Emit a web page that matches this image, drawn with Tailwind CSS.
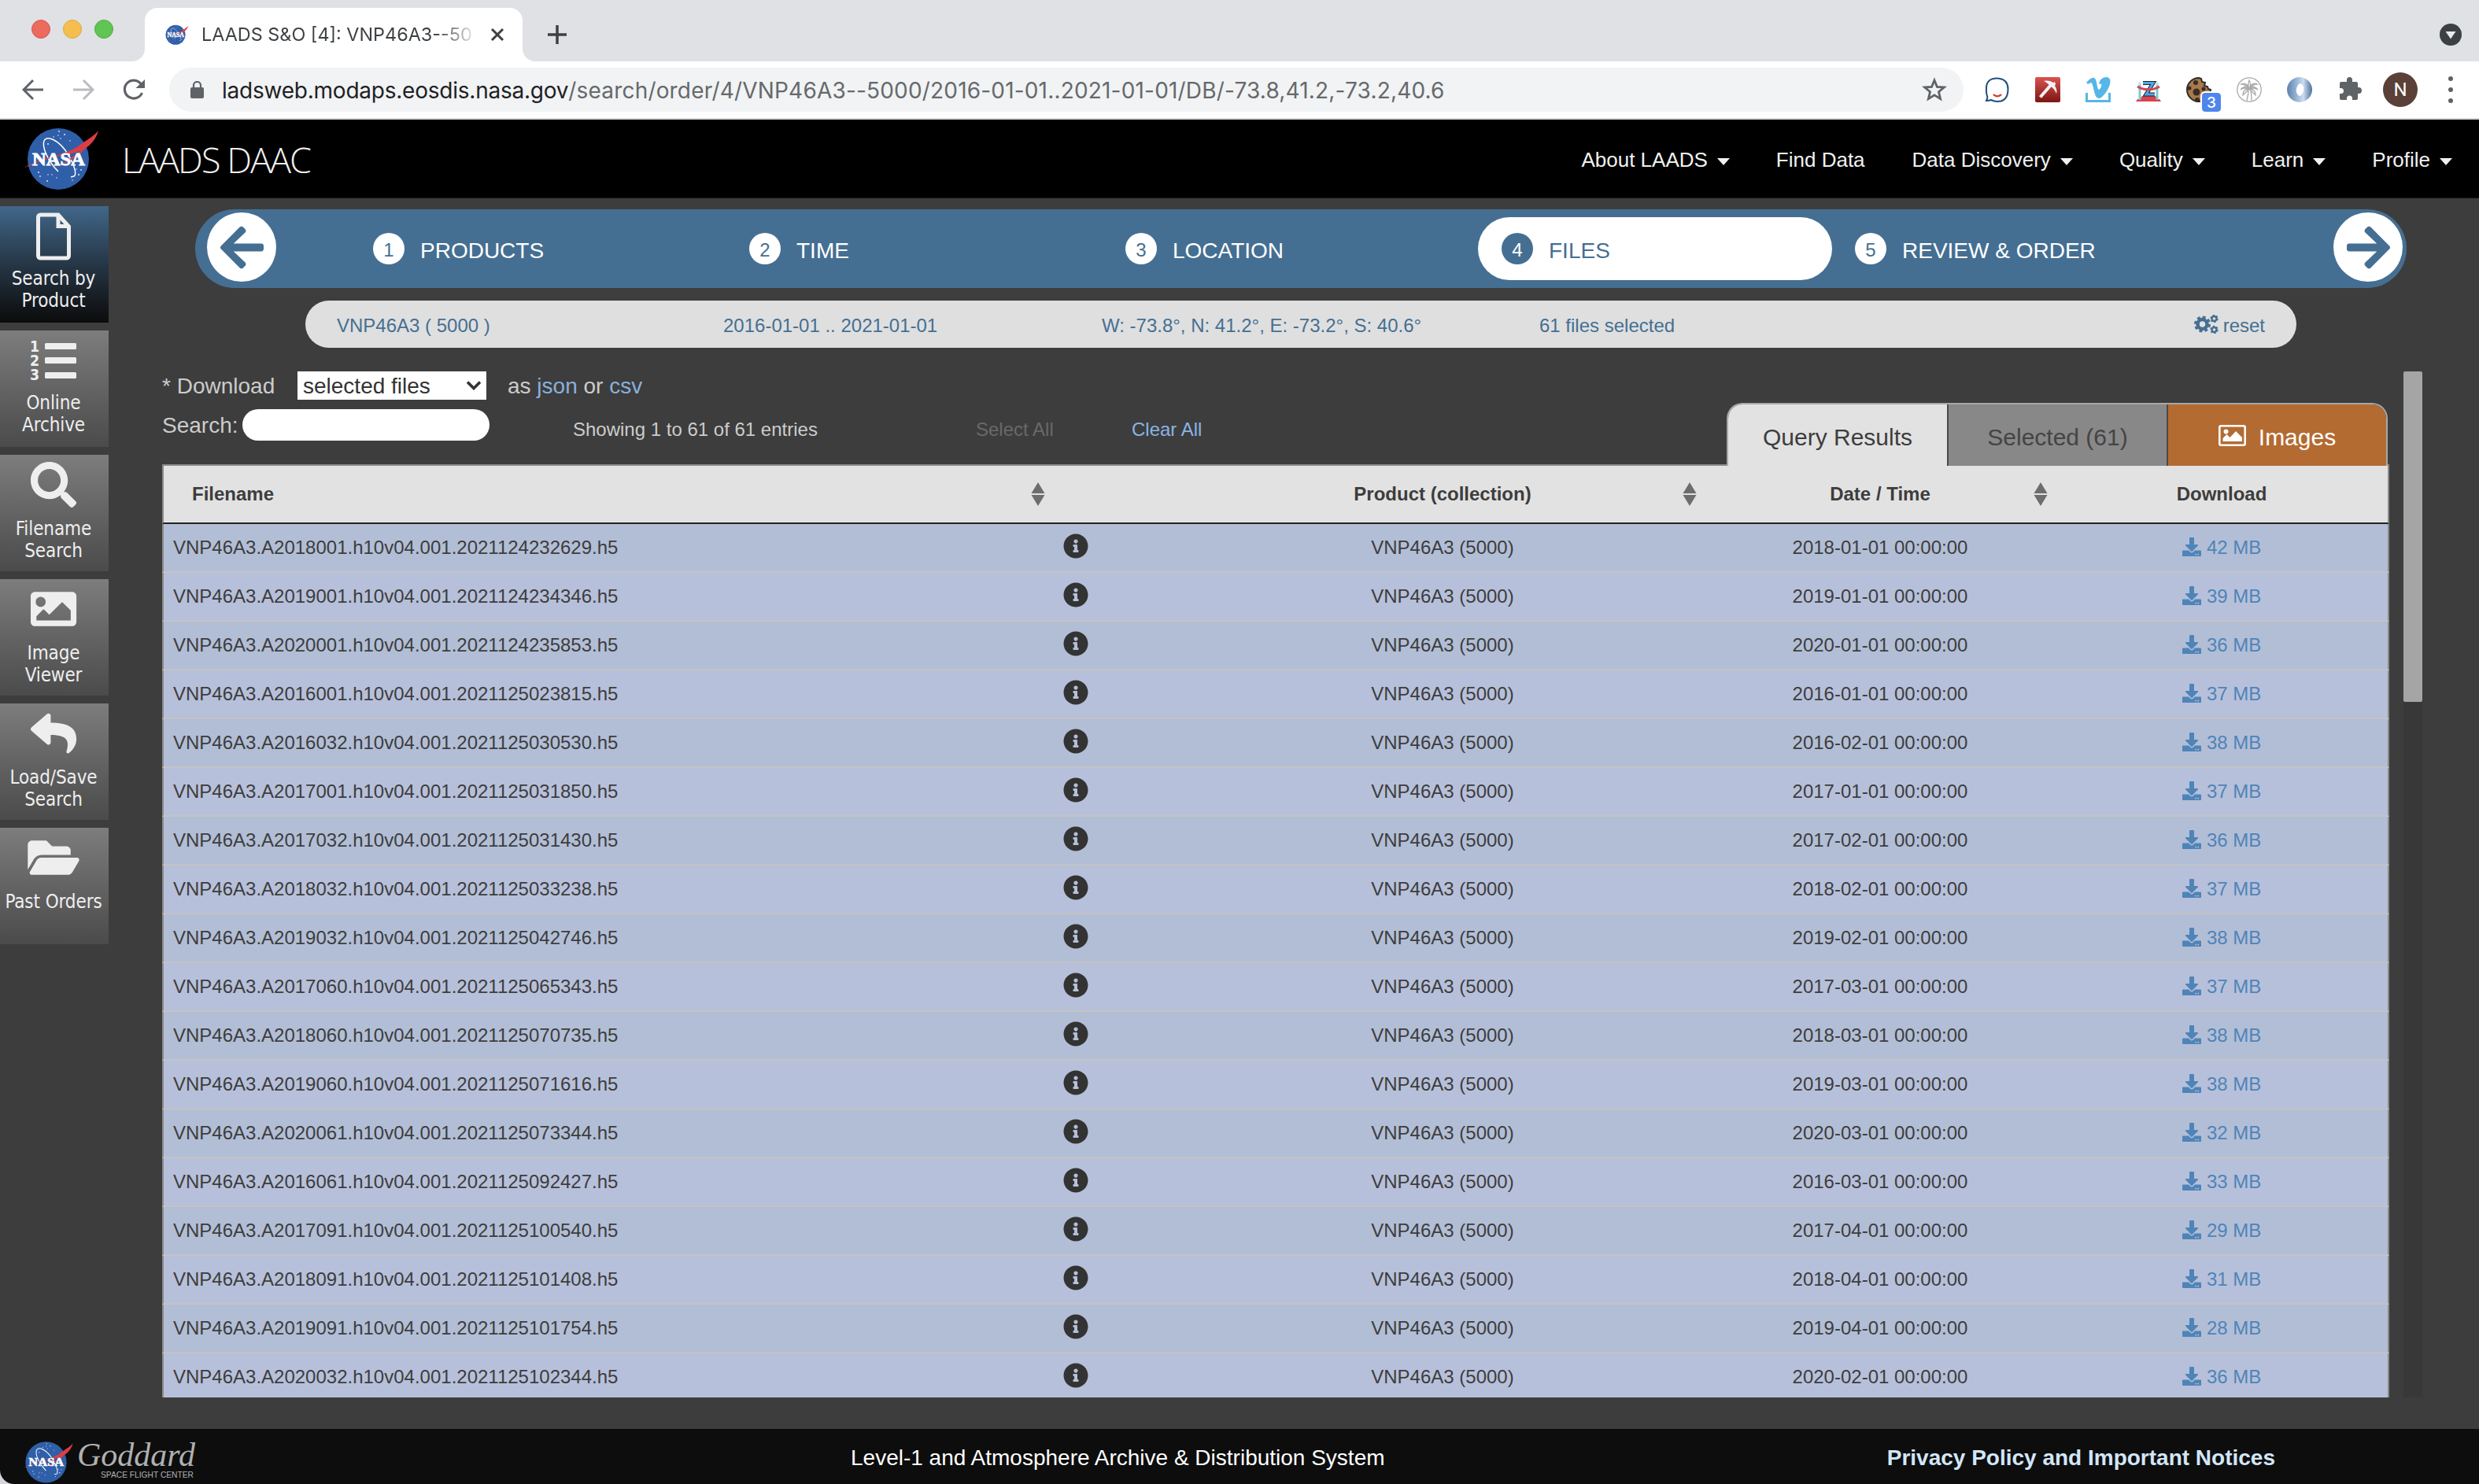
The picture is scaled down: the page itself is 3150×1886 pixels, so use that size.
<!DOCTYPE html>
<html lang="en">
<head>
<meta charset="utf-8">
<title>LAADS S&amp;O [4]: VNP46A3--5000</title>
<script src="https://cdn.jsdelivr.net/npm/@tailwindcss/browser@4"></script>
</head>
<body class="bg-[#d5d7dc]">
<svg class="hidden">
  <symbol id="nasa" viewBox="0 0 100 84">
    <circle cx="47" cy="43" r="39" fill="#2f5fa9"/>
    <g fill="#dfe8f6"><circle cx="48" cy="8" r=".9"/><circle cx="55" cy="12" r="1"/><circle cx="41" cy="15" r=".8"/><circle cx="34" cy="24" r="1"/><circle cx="47" cy="13" r=".8"/><circle cx="22" cy="60" r="1"/><circle cx="24" cy="65" r=".9"/><circle cx="33" cy="71" r="1"/><circle cx="34" cy="63" r=".8"/><circle cx="45" cy="67" r=".8"/><circle cx="65" cy="70" r=".8"/><circle cx="73" cy="63" r="1.1"/><circle cx="76" cy="57" r=".9"/><circle cx="70" cy="56" r=".8"/><circle cx="39" cy="63" r=".8"/><circle cx="50" cy="17" r=".8"/><circle cx="62" cy="20" r=".8"/></g>
    <path d="M47 59C34 46 26 28 29 20c4-8 18 0 27 12 9 13 16 30 11 33l-4 1" fill="none" stroke="#fff" stroke-width="1.5"/>
    <path d="M4 54C30 39 60 38 76 24 88 16 94 12 98 7 94 22 82 33 64 36 40 39 20 48 4 54Z" fill="#dd3d45"/>
    <path d="M14 78C30 60 56 48 74 34c6-5 10-9 14-14C76 40 62 45 46 53 32 61 22 70 14 78Z" fill="#dd3d45"/>
    <text x="14" y="50.500" textLength="67" lengthAdjust="spacingAndGlyphs" font-family="Liberation Serif, serif" font-weight="700" font-size="23" fill="#fff" stroke="#fff" stroke-width=".8">NASA</text>
  </symbol>
  <symbol id="info" viewBox="0 0 512 512"><path fill="#333" d="M256 8C119.043 8 8 119.083 8 256c0 136.997 111.043 248 248 248s248-111.003 248-248C504 119.083 392.957 8 256 8zm0 110c23.196 0 42 18.804 42 42s-18.804 42-42 42-42-18.804-42-42 18.804-42 42-42zm56 254c0 6.627-5.373 12-12 12h-88c-6.627 0-12-5.373-12-12v-24c0-6.627 5.373-12 12-12h12v-64h-12c-6.627 0-12-5.373-12-12v-24c0-6.627 5.373-12 12-12h64c6.627 0 12 5.373 12 12v100h12c6.627 0 12 5.373 12 12v24z"/></symbol>
  <symbol id="dl" viewBox="0 0 512 512"><path fill="#4f84b8" d="M216 0h80c13.3 0 24 10.7 24 24v168h87.7c17.8 0 26.7 21.5 14.1 34.1L269.7 378.3c-7.5 7.5-19.8 7.5-27.3 0L90.1 226.1c-12.6-12.6-3.700-34.1 14.1-34.1H192V24c0-13.3 10.7-24 24-24zm296 376v112c0 13.3-10.7 24-24 24H24c-13.3 0-24-10.7-24-24V376c0-13.3 10.7-24 24-24h146.700l49 49c20.1 20.1 52.5 20.1 72.6 0l49-49H488c13.3 0 24 10.7 24 24zm-124 88c0-11-9-20-20-20s-20 9-20 20 9 20 20 20 20-9 20-20zm64 0c0-11-9-20-20-20s-20 9-20 20 9 20 20 20 20-9 20-20z"/></symbol>
  <symbol id="arrow" viewBox="0 0 448 512"><path fill="#456f92" d="M257.5 445.1l-22.2 22.2c-9.4 9.4-24.6 9.4-33.9 0L7 273c-9.4-9.4-9.4-24.6 0-33.9L201.4 44.7c9.4-9.4 24.6-9.4 33.9 0l22.2 22.2c9.5 9.5 9.3 25-.4 34.3L136.6 216H424c13.3 0 24 10.7 24 24v32c0 13.3-10.7 24-24 24H136.6l120.5 114.8c9.8 9.3 10 24.8.4 34.3z"/></symbol>
  <symbol id="sort" viewBox="0 0 18 32"><path d="M9 1l8.500 14H.5zM9 31L.5 17h17z" fill="#6d6d6d"/></symbol>
  <symbol id="caret" viewBox="0 0 16 9"><path d="M0 0h16L8 9z" fill="#f0f0f0"/></symbol>
</svg>

<div class="flex h-[1886px] w-[3150px] flex-col overflow-hidden font-['Liberation_Sans',Arial,sans-serif] text-2xl leading-7">

  <!-- tab strip -->
  <div class="flex h-[78px] shrink-0 bg-[#dfe1e5] font-[Inter,sans-serif]">
    <div class="flex w-[168px] items-center gap-4 pt-0 pb-1 pl-10">
      <i class="size-6 rounded-full border border-[#d9584c] bg-[#ec6a5e]"></i>
      <i class="size-6 rounded-full border border-[#dfa63e] bg-[#f4bf4f]"></i>
      <i class="size-6 rounded-full border border-[#51ab40] bg-[#61c554]"></i>
    </div>
    <svg class="mt-[62px] size-4 shrink-0"><path d="M16 0v16H0A16 16 0 0 0 16 0z" fill="#fff"/></svg>
    <div class="mt-[10px] flex w-[480px] items-center rounded-t-2xl bg-white pl-[24px]">
      <svg class="h-[28px] w-[32px]"><use href="#nasa"/></svg>
      <div class="ml-4 w-[352px] overflow-hidden whitespace-nowrap bg-gradient-to-r from-[#3c4043] from-85% to-transparent bg-clip-text text-[23.4px] text-transparent">LAADS S&amp;O [4]: VNP46A3--50</div>
      <svg class="ml-[15px] size-[18px]" viewBox="0 0 18 18"><path d="M2 2l14 14M16 2L2 16" stroke="#3c4043" stroke-width="3"/></svg>
    </div>
    <svg class="mt-[62px] size-4 shrink-0"><path d="M0 0v16h16A16 16 0 0 1 0 0z" fill="#fff"/></svg>
    <svg class="mt-8 ml-4 size-6" viewBox="0 0 24 24"><path d="M12 0v24M0 12h24" stroke="#3c4043" stroke-width="3.500"/></svg>
    <svg class="mt-[30px] mr-[22px] ml-auto size-7" viewBox="0 0 28 28"><circle cx="14" cy="14" r="14" fill="#3c4043"/><path d="M7.500 10h13L14 19.500z" fill="#e8eaed"/></svg>
  </div>

  <!-- address bar -->
  <div class="flex h-[74px] shrink-0 items-center border-b-2 border-[#d5d7dc] bg-white font-[Inter,sans-serif]">
    <svg class="ml-7 size-7" viewBox="0 0 28 28" fill="none" stroke="#5f6368" stroke-width="3"><path d="M27 14H3M14 2L2 14l12 12"/></svg>
    <svg class="ml-9 size-7" viewBox="0 0 28 28" fill="none" stroke="#b9bbbe" stroke-width="3"><path d="M1 14h24M14 2l12 12-12 12"/></svg>
    <svg class="ml-9 size-7" viewBox="0 0 28 28"><path d="M24.500 18A11.500 11.500 0 1 1 23 6.500" fill="none" stroke="#5f6368" stroke-width="3.200"/><path d="M28 1v11H16.500z" fill="#5f6368"/></svg>
    <div class="ml-[31px] flex h-14 w-[2280px] items-center rounded-full bg-[#f1f3f4] pl-[27px]">
      <svg class="h-[22px] w-[17px]" viewBox="0 0 17 22"><rect y="8" width="17" height="14" rx="2" fill="#5f6368"/><path d="M4 9V5.500a4.500 4.500 0 0 1 9 0V9" fill="none" stroke="#5f6368" stroke-width="2.200"/></svg>
      <div class="ml-[23px] pt-[1px] text-[28px] tracking-[0.18px] whitespace-nowrap text-[#66696c]"><span class="tracking-[-0.23px] text-[#202124]">ladsweb.modaps.eosdis.nasa.gov</span>/search/order/4/VNP46A3--5000/2016-01-01..2021-01-01/DB/-73.8,41.2,-73.2,40.6</div>
      <svg class="mr-[21px] ml-auto size-8" viewBox="0 0 32 32"><path d="M16 4l3.400 8.300 9 .700-6.900 5.800 2.100 8.800L16 22.900l-7.600 4.700 2.100-8.800L3.600 13l9-.700z" fill="none" stroke="#5f6368" stroke-width="2.800"/></svg>
    </div>
    <div class="ml-[27px] flex items-center gap-8">
      <svg class="size-8" viewBox="0 0 32 32"><path d="M2 30c1-2 2-4 1-6C1.500 20 2 17 2 14 2 5 8 1.500 15.500 1.500S29.500 5 29.500 15 25 31 16 31c-4 0-6-1-8-2-2 1-4 1-6 1z" fill="#fff" stroke="#1f4e7d" stroke-width="2"/><path d="M11 22c3 3 7 3 10 0" fill="none" stroke="#d8342c" stroke-width="2.400"/></svg>
      <svg class="size-8" viewBox="0 0 32 32"><defs><linearGradient id="rg" x2="0" y2="1"><stop stop-color="#d9534f"/><stop offset="1" stop-color="#7c1512"/></linearGradient></defs><rect width="32" height="32" rx="2" fill="url(#rg)"/><path d="M6.500 25.500L20 10" stroke="#f3f1f6" stroke-width="4"/><path d="M11 5c6-1 9 0 12 2l2-1 1 3-1 2c2 3 3 6 2 10-2-5-4-7-7-9-3-3-5-5-9-7z" fill="#f3f1f6"/></svg>
      <svg class="size-8" viewBox="0 0 32 32" fill="#55b6e8"><path d="M1.500 20v10.500h29V20" fill="none" stroke="#55b6e8" stroke-width="3"/><path d="M1 7C4 4 8 0 11 1c4 1 3 14 6 15 2-1 4-5 3-7-1-1-2 0-3 0C18 3 22 0 27 0c5 1 5 5 4 9-2 7-8 16-13 18-5 0-6-5-7-9S9 8 7 7L3 9z"/></svg>
      <svg class="size-8" viewBox="0 0 32 32"><path d="M2 28h28l2 3H0zM8 24h17l3 4H5z" fill="#d64550"/><path d="M9 7.500h13L13 22h11" fill="none" stroke="#222" stroke-width="5"/><path d="M9 7.500h13L13 22h11" fill="none" stroke="#4aa8ea" stroke-width="3"/><path d="M5 9v20M27 9v20" stroke="#7cc9cf" stroke-width="3"/><path d="M2 12c8 5 20 5 28 0" fill="none" stroke="#d64550" stroke-width="3"/><circle cx="5" cy="8" r="2" fill="#cfe5e8"/><circle cx="27" cy="8" r="2" fill="#cfe5e8"/></svg>
      <div class="relative size-8">
        <svg class="size-8" viewBox="0 0 32 32"><path d="M16 1a15 15 0 1 0 15 15l-3-1-1-3-4-1 1-4-4-1-1-4z" fill="#a9794a" stroke="#2d2b29" stroke-width="2"/><g fill="#3a2c26"><circle cx="12" cy="7" r="3"/><circle cx="13" cy="19" r="4.500"/><circle cx="4" cy="14" r="2.500"/><circle cx="22" cy="15" r="2.500"/><circle cx="14" cy="29" r="3"/></g></svg>
        <b class="absolute top-5 left-5 grid h-6 w-6 place-items-center rounded-[4px] bg-[#4f86ec] text-[19px] leading-none font-medium text-white outline-2 outline-white">3</b>
      </div>
      <svg class="size-8" viewBox="0 0 32 32" fill="none" stroke="#a9a9a9" stroke-width="1.300"><circle cx="16" cy="16" r="15.200"/><path d="M15 16c0 6-1 10-2 14M18 17c1 5 1 9 1 13M16 15C12 11 8 12 5 16c4-3 7-2 11-1zM16 15c-6 0-8 3-8 8 3-3 5-5 8-8zM16 15c4-4 8-3 11 1-4-3-7-2-11-1zM16 15c6 0 8 3 8 8-3-3-5-5-8-8zM16 15c-3-4-6-6-10-6 3-2 8-1 10 6zM16 15c3-4 6-6 10-6-3-2-8-1-10 6zM16 15c-2-4-1-8 0-11 2 3 2 7 0 11z"/></svg>
      <svg class="size-8" viewBox="0 0 32 32"><defs><linearGradient id="bg" x2="1" y2="0"><stop stop-color="#5b80ad"/><stop offset=".4" stop-color="#9db8d8"/><stop offset=".65" stop-color="#cddcee"/><stop offset="1" stop-color="#49709f"/></linearGradient></defs><path d="M16 0a16 16 0 1 0 .01 0zM17 8c3 1 5 5 4 9-1 4-3 7-5 7-3-1-5-5-4-9 1-4 3-7 5-7z" fill="url(#bg)" fill-rule="evenodd"/></svg>
      <svg class="size-8" viewBox="0 0 32 32"><path d="M12 3.500a3.500 3.500 0 0 1 7 0V6h5a2 2 0 0 1 2 2v5h1a4 4 0 0 1 0 8h-1v6a2 2 0 0 1-2 2h-5v-2a3.500 3.500 0 0 0-7 0v2H5a2 2 0 0 1-2-2v-6h1.500a3.500 3.500 0 0 0 0-7H3V8a2 2 0 0 1 2-2h7z" fill="#5f6368"/></svg>
    </div>
    <div class="ml-[26px] grid size-11 place-items-center rounded-full bg-[#5a4037] font-[Roboto,sans-serif] text-[24px] text-white">N</div>
    <div class="ml-[39px] flex flex-col gap-2"><i class="size-[6px] rounded-full bg-[#5f6368]"></i><i class="size-[6px] rounded-full bg-[#5f6368]"></i><i class="size-[6px] rounded-full bg-[#5f6368]"></i></div>
  </div>

  <!-- site header -->
  <header class="flex h-[100px] shrink-0 items-center border-b-2 border-[#0a0a0a] bg-black text-[26px] text-[#f0f0f0]">
    <svg class="ml-[27px] h-[84px] w-[100px]"><use href="#nasa"/></svg>
    <div class="ml-[28px] pt-[4px] font-['Open_Sans',sans-serif] text-[45px] leading-[50px] font-light tracking-[-2px] whitespace-nowrap">LAADS DAAC</div>
    <nav class="mr-[34px] ml-auto flex items-center gap-[59px] pt-1 whitespace-nowrap">
      <span class="flex items-center">About LAADS<svg class="mt-1 ml-3 h-[9px] w-4"><use href="#caret"/></svg></span>
      <span class="mr-[1px]">Find Data</span>
      <span class="flex items-center">Data Discovery<svg class="mt-1 ml-3 h-[9px] w-4"><use href="#caret"/></svg></span>
      <span class="flex items-center">Quality<svg class="mt-1 ml-3 h-[9px] w-4"><use href="#caret"/></svg></span>
      <span class="flex items-center">Learn<svg class="mt-1 ml-3 h-[9px] w-4"><use href="#caret"/></svg></span>
      <span class="flex items-center">Profile<svg class="mt-1 ml-3 h-[9px] w-4"><use href="#caret"/></svg></span>
    </nav>
  </header>

  <div class="flex h-[1564px] shrink-0 bg-[#3d3d3d]">
    <!-- side menu -->
    <aside class="flex w-[138px] shrink-0 flex-col gap-[10px] pt-[10px] text-center font-['DejaVu_Sans_Condensed','DejaVu_Sans',sans-serif] [font-stretch:condensed] text-[24px] leading-7 tracking-[-0.1px] text-[#eee]">
      <div class="h-[148px] bg-gradient-to-b from-[#41678a] to-[#0c0c0c]">
        <svg class="h-[78px] w-[138px]"><path d="M48.500 14a3 3 0 0 1 3-3H74l13.500 15v37a3 3 0 0 1-3 3h-33a3 3 0 0 1-3-3zM74 11v14.500h13" fill="none" stroke="#eee" stroke-width="5"/></svg>
        <div class="pr-[2px]">Search by<br>Product</div>
      </div>
      <div class="h-[148px] bg-gradient-to-b from-[#7d7d7d] to-[#4b4b4b]">
        <svg class="h-[78px] w-[138px]" fill="#eee"><rect x="57" y="16" width="40" height="8" rx="1.500"/><rect x="57" y="34" width="40" height="8" rx="1.500"/><rect x="57" y="53" width="40" height="8" rx="1.500"/><g font-family="DejaVu Sans" font-weight="700" font-size="19"><text x="38" y="27" textLength="12" lengthAdjust="spacingAndGlyphs">1</text><text x="38" y="45" textLength="12" lengthAdjust="spacingAndGlyphs">2</text><text x="38" y="63" textLength="12" lengthAdjust="spacingAndGlyphs">3</text></g></svg>
        <div class="pr-[2px]">Online<br>Archive</div>
      </div>
      <div class="h-[148px] bg-gradient-to-b from-[#7d7d7d] to-[#4b4b4b]">
        <svg class="h-20 w-[138px]" fill="#eee"><path transform="translate(39 9) scale(.1135)" d="M505 442.7L405.3 343c-4.5-4.5-10.6-7-17-7H372c27.6-35.3 44-79.7 44-128C416 93.1 322.9 0 208 0S0 93.1 0 208s93.1 208 208 208c48.3 0 92.7-16.4 128-44v16.3c0 6.4 2.5 12.5 7 17l99.7 99.7c9.4 9.4 24.6 9.4 33.9 0l28.3-28.3c9.4-9.4 9.4-24.6.1-34zM208 336c-70.7 0-128-57.2-128-128 0-70.7 57.2-128 128-128 70.7 0 128 57.2 128 128 0 70.7-57.2 128-128 128z"/></svg>
        <div class="pr-[2px]">Filename<br>Search</div>
      </div>
      <div class="h-[148px] bg-gradient-to-b from-[#7d7d7d] to-[#4b4b4b]">
        <svg class="h-20 w-[138px]" fill="#eee"><path transform="translate(39 9) scale(.1135)" d="M464 448H48c-26.51 0-48-21.49-48-48V112c0-26.51 21.49-48 48-48h416c26.51 0 48 21.49 48 48v288c0 26.51-21.49 48-48 48zM112 120c-30.928 0-56 25.072-56 56s25.072 56 56 56 56-25.072 56-56-25.072-56-56-56zM64 384h384V272l-87.515-87.515c-4.686-4.686-12.284-4.686-16.971 0L208 320l-55.515-55.515c-4.686-4.686-12.284-4.686-16.971 0L64 336v48z"/></svg>
        <div class="pr-[2px]">Image<br>Viewer</div>
      </div>
      <div class="h-[148px] bg-gradient-to-b from-[#7d7d7d] to-[#4b4b4b]">
        <svg class="h-20 w-[138px]" fill="#eee"><path transform="translate(39 9) scale(.1135)" d="M8.309 189.836L184.313 37.851C199.719 24.546 224 35.347 224 56.015v80.053c160.629 1.839 288 34.032 288 186.258 0 61.441-39.581 122.309-83.333 154.132-13.653 9.931-33.111-2.533-28.077-18.631 45.344-145.012-21.507-183.51-176.59-185.742V360c0 20.7-24.3 31.453-39.687 18.164l-176.004-152c-11.071-9.562-11.086-26.753 0-36.328z"/></svg>
        <div class="pr-[2px]">Load/Save<br>Search</div>
      </div>
      <div class="h-[148px] bg-gradient-to-b from-[#7d7d7d] to-[#4b4b4b]">
        <svg class="h-20 w-[138px]" fill="#eee"><path transform="translate(35.300 9) scale(.1135)" d="M572.694 292.093L500.27 416.248A63.997 63.997 0 0 1 444.989 448H45.025c-18.523 0-30.064-20.093-20.731-36.093l72.424-124.155A64 64 0 0 1 152 256h399.964c18.523 0 30.064 20.093 20.73 36.093zM152 224h328v-48c0-26.51-21.49-48-48-48H272l-64-64H48C21.49 64 0 85.49 0 112v278.046l69.077-118.418C86.214 242.25 117.989 224 152 224z"/></svg>
        <div class="pr-[2px]">Past Orders</div>
      </div>
    </aside>

    <main class="flex flex-1 flex-col pt-[14px]">
      <!-- steps -->
      <div class="ml-[110px] flex h-[100px] w-[2810px] shrink-0 items-center rounded-full bg-[#456f92] pr-[5px] pl-[15px] text-[28px] text-white">
        <div class="mb-1 grid size-[88px] shrink-0 place-items-center rounded-full bg-white"><svg class="h-[63px] w-[55px]"><use href="#arrow"/></svg></div>
        <div class="ml-[123px] flex w-[478px] items-center gap-5"><b class="grid size-10 place-items-center rounded-full bg-white pt-[3px] text-2xl font-normal text-[#456f92]">1</b><span class="pt-[5px]">PRODUCTS</span></div>
        <div class="flex w-[478px] items-center gap-5"><b class="grid size-10 place-items-center rounded-full bg-white pt-[3px] text-2xl font-normal text-[#456f92]">2</b><span class="pt-[5px]">TIME</span></div>
        <div class="flex w-[448px] items-center gap-5"><b class="grid size-10 place-items-center rounded-full bg-white pt-[3px] text-2xl font-normal text-[#456f92]">3</b><span class="pt-[5px]">LOCATION</span></div>
        <div class="flex h-20 w-[450px] items-center gap-5 rounded-full bg-white pl-[30px] text-[#456f92]"><b class="grid size-10 place-items-center rounded-full bg-[#456f92] pt-[3px] text-2xl font-normal text-white">4</b><span class="pt-[5px]">FILES</span></div>
        <div class="ml-[29px] flex items-center gap-5"><b class="grid size-10 place-items-center rounded-full bg-white pt-[3px] text-2xl font-normal text-[#456f92]">5</b><span class="pt-[5px]">REVIEW &amp; ORDER</span></div>
        <div class="mb-1 ml-auto grid size-[88px] shrink-0 place-items-center rounded-full bg-white"><svg class="h-[63px] w-[55px] rotate-180"><use href="#arrow"/></svg></div>
      </div>

      <!-- query summary -->
      <div class="mt-4 ml-[250px] flex h-[60px] w-[2530px] shrink-0 items-center rounded-full bg-[#dfdfdf] pt-1 pl-10 text-[#456f92]">
        <span class="w-[491px]">VNP46A3 ( 5000 )</span>
        <span class="w-[481px]">2016-01-01 .. 2021-01-01</span>
        <span class="w-[556px]">W: -73.8°, N: 41.2°, E: -73.2°, S: 40.6°</span>
        <span>61 files selected</span>
        <span class="mr-10 ml-auto flex items-center gap-[6px]"><svg class="mb-1 h-6 w-[31px]" viewBox="0 0 31 24" fill="none" stroke="#456f92"><circle cx="10.500" cy="12" r="6" stroke-width="4.500"/><circle cx="10.500" cy="12" r="9" stroke-width="3" stroke-dasharray="3.900 3.170"/><circle cx="25.500" cy="5" r="3" stroke-width="2.400"/><circle cx="25.500" cy="5" r="4.500" stroke-width="1.400" stroke-dasharray="2.400 2.310"/><circle cx="25.500" cy="19" r="3" stroke-width="2.400"/><circle cx="25.500" cy="19" r="4.500" stroke-width="1.400" stroke-dasharray="2.400 2.310"/></svg>reset</span>
      </div>

      <div class="mt-[30px] ml-[68px] flex h-[1304px] w-[2872px] shrink-0 justify-between">
        <div class="flex w-[2830px] flex-col overflow-hidden">
          <!-- controls and tabs -->
          <div class="flex h-[118px] shrink-0 text-[#ccc]">
            <div class="w-[1988px]">
              <div class="flex h-9 items-center text-[28px]">
                <span class="w-[172px] pt-[2px]">* Download</span>
                <div class="flex h-9 w-60 items-center bg-white pl-[7px] text-[#333]"><span class="pt-[2px]">selected files</span><svg class="mr-[6px] ml-auto h-3 w-5" viewBox="0 0 20 12"><path d="M2 1.500l8 8 8-8" fill="none" stroke="#333" stroke-width="3.600"/></svg></div>
                <span class="ml-[27px] pt-[2px]">as <a class="text-[#8ab0dc]">json</a> or <a class="text-[#8ab0dc]">csv</a></span>
              </div>
              <div class="mt-3 flex h-10 items-center">
                <span class="w-[102px] pt-[1px] text-[28px]">Search:</span>
                <div class="h-10 w-[314px] rounded-full bg-white"></div>
                <span class="ml-[106px] w-[512px] pt-3">Showing 1 to 61 of 61 entries</span>
                <span class="w-[198px] pt-3 text-[#696969]">Select All</span>
                <span class="pt-3 text-[#8ab4e4]">Clear All</span>
              </div>
            </div>
            <div class="z-10 mt-10 flex h-20 w-[840px] overflow-hidden rounded-t-[20px] border-2 border-b-0 border-[#a8a8a8] text-[30px] text-[#3d3d3d]">
              <div class="grid w-[278px] place-items-center bg-[#e2e2e2] pt-[5px]">Query Results</div>
              <div class="grid w-[281px] place-items-center border-x-2 border-[#4a4a4a] bg-[#888] pt-[5px] text-[#444]">Selected (61)</div>
              <div class="flex flex-1 items-center justify-center gap-4 bg-[#b36b32] pt-[5px] text-white"><svg class="mb-1 h-[27px] w-[35px]" viewBox="0 0 35 27"><rect x="1.300" y="1.300" width="32.400" height="24.400" rx="2" fill="none" stroke="#fff" stroke-width="2.600"/><circle cx="9.500" cy="8.500" r="3" fill="#fff"/><path d="M5.500 21v-4l5-5 4 4L22 8l8 8v5z" fill="#fff"/></svg>Images</div>
            </div>
          </div>

          <!-- results -->
          <div class="flex min-h-0 flex-1 flex-col border-2 border-b-0 border-[#8a8a8a] text-[#3d3d3d]">
            <div class="-mx-[2px] flex h-[74px] shrink-0 items-center border-x-2 border-b-2 border-x-[#8a8a8a] border-b-[#222] bg-[#e2e2e2] pl-9 font-bold whitespace-nowrap">
              <span class="w-[1066px]">Filename</span>
              <svg class="h-8 w-[18px] shrink-0"><use href="#sort"/></svg>
              <span class="w-[810px] pl-[200px] text-center">Product (collection)</span>
              <svg class="h-8 w-[18px] shrink-0"><use href="#sort"/></svg>
              <span class="w-[428px] pl-[38px] text-center">Date / Time</span>
              <svg class="h-8 w-[18px] shrink-0"><use href="#sort"/></svg>
              <span class="w-[432px] pl-[10px] text-center">Download</span>
            </div>
            <div id="rows" class="flex flex-col"></div>
          </div>
        </div>
        <div class="w-6 bg-[#383838]"><div class="h-[420px] rounded-[2px] bg-[#a5a5a5]"></div></div>
      </div>
    </main>
  </div>

  <footer class="flex h-[70px] shrink-0 items-center rounded-bl-[18px] bg-[#0d0d0d] text-[28px] text-white">
    <svg class="h-[70px] w-[260px] shrink-0 overflow-visible" font-family="Liberation Sans, Arial, sans-serif" fill="#b0b0b0">
      <svg x="27" y="13.500" width="67" height="56.500" viewBox="0 0 100 84"><use href="#nasa"/></svg>
      <text x="98" y="47" textLength="150" lengthAdjust="spacingAndGlyphs" font-family="Liberation Serif, serif" font-style="italic" font-size="42">Goddard</text>
      <text x="128" y="62" textLength="118" lengthAdjust="spacingAndGlyphs" font-size="11.500">SPACE FLIGHT CENTER</text>
    </svg>
    <span class="ml-[821px] pt-[3px]">Level-1 and Atmosphere Archive &amp; Distribution System</span>
    <b class="mr-[259px] ml-auto pt-[3px] text-[#d2e6f7]">Privacy Policy and Important Notices</b>
  </footer>
</div>

<script>
  const files = [
    ['2018001', '2021124232629', '2018-01-01', 42], ['2019001', '2021124234346', '2019-01-01', 39],
    ['2020001', '2021124235853', '2020-01-01', 36], ['2016001', '2021125023815', '2016-01-01', 37],
    ['2016032', '2021125030530', '2016-02-01', 38], ['2017001', '2021125031850', '2017-01-01', 37],
    ['2017032', '2021125031430', '2017-02-01', 36], ['2018032', '2021125033238', '2018-02-01', 37],
    ['2019032', '2021125042746', '2019-02-01', 38], ['2017060', '2021125065343', '2017-03-01', 37],
    ['2018060', '2021125070735', '2018-03-01', 38], ['2019060', '2021125071616', '2019-03-01', 38],
    ['2020061', '2021125073344', '2020-03-01', 32], ['2016061', '2021125092427', '2016-03-01', 33],
    ['2017091', '2021125100540', '2017-04-01', 29], ['2018091', '2021125101408', '2018-04-01', 31],
    ['2019091', '2021125101754', '2019-04-01', 28], ['2020032', '2021125102344', '2020-02-01', 36],
  ];
  document.getElementById('rows').innerHTML = files.map(([day, made, date, mb], i) => `
    <div class="-mx-[2px] grid h-[62px] shrink-0 grid-cols-[1128px_64px_866px_246px_1fr] items-center border-b-2 border-b-[#c3c3c3] border-x-2 border-x-[#8a8a8a] whitespace-nowrap ${i % 2 ? 'bg-[#b7c0da]' : 'bg-[#b2bed6]'}">
      <span class="pl-3">VNP46A3.A${day}.h10v04.001.${made}.h5</span>
      <svg class="mb-1 ml-[15px] size-8"><use href="#info"/></svg>
      <span class="text-center">VNP46A3 (5000)</span>
      <span class="text-center">${date} 00:00:00</span>
      <span class="flex items-center gap-[7px] pl-[261px] text-[#4f84b8]"><svg class="mb-0.5 size-6"><use href="#dl"/></svg>${mb} MB</span>
    </div>`).join('');
</script>
</body>
</html>
